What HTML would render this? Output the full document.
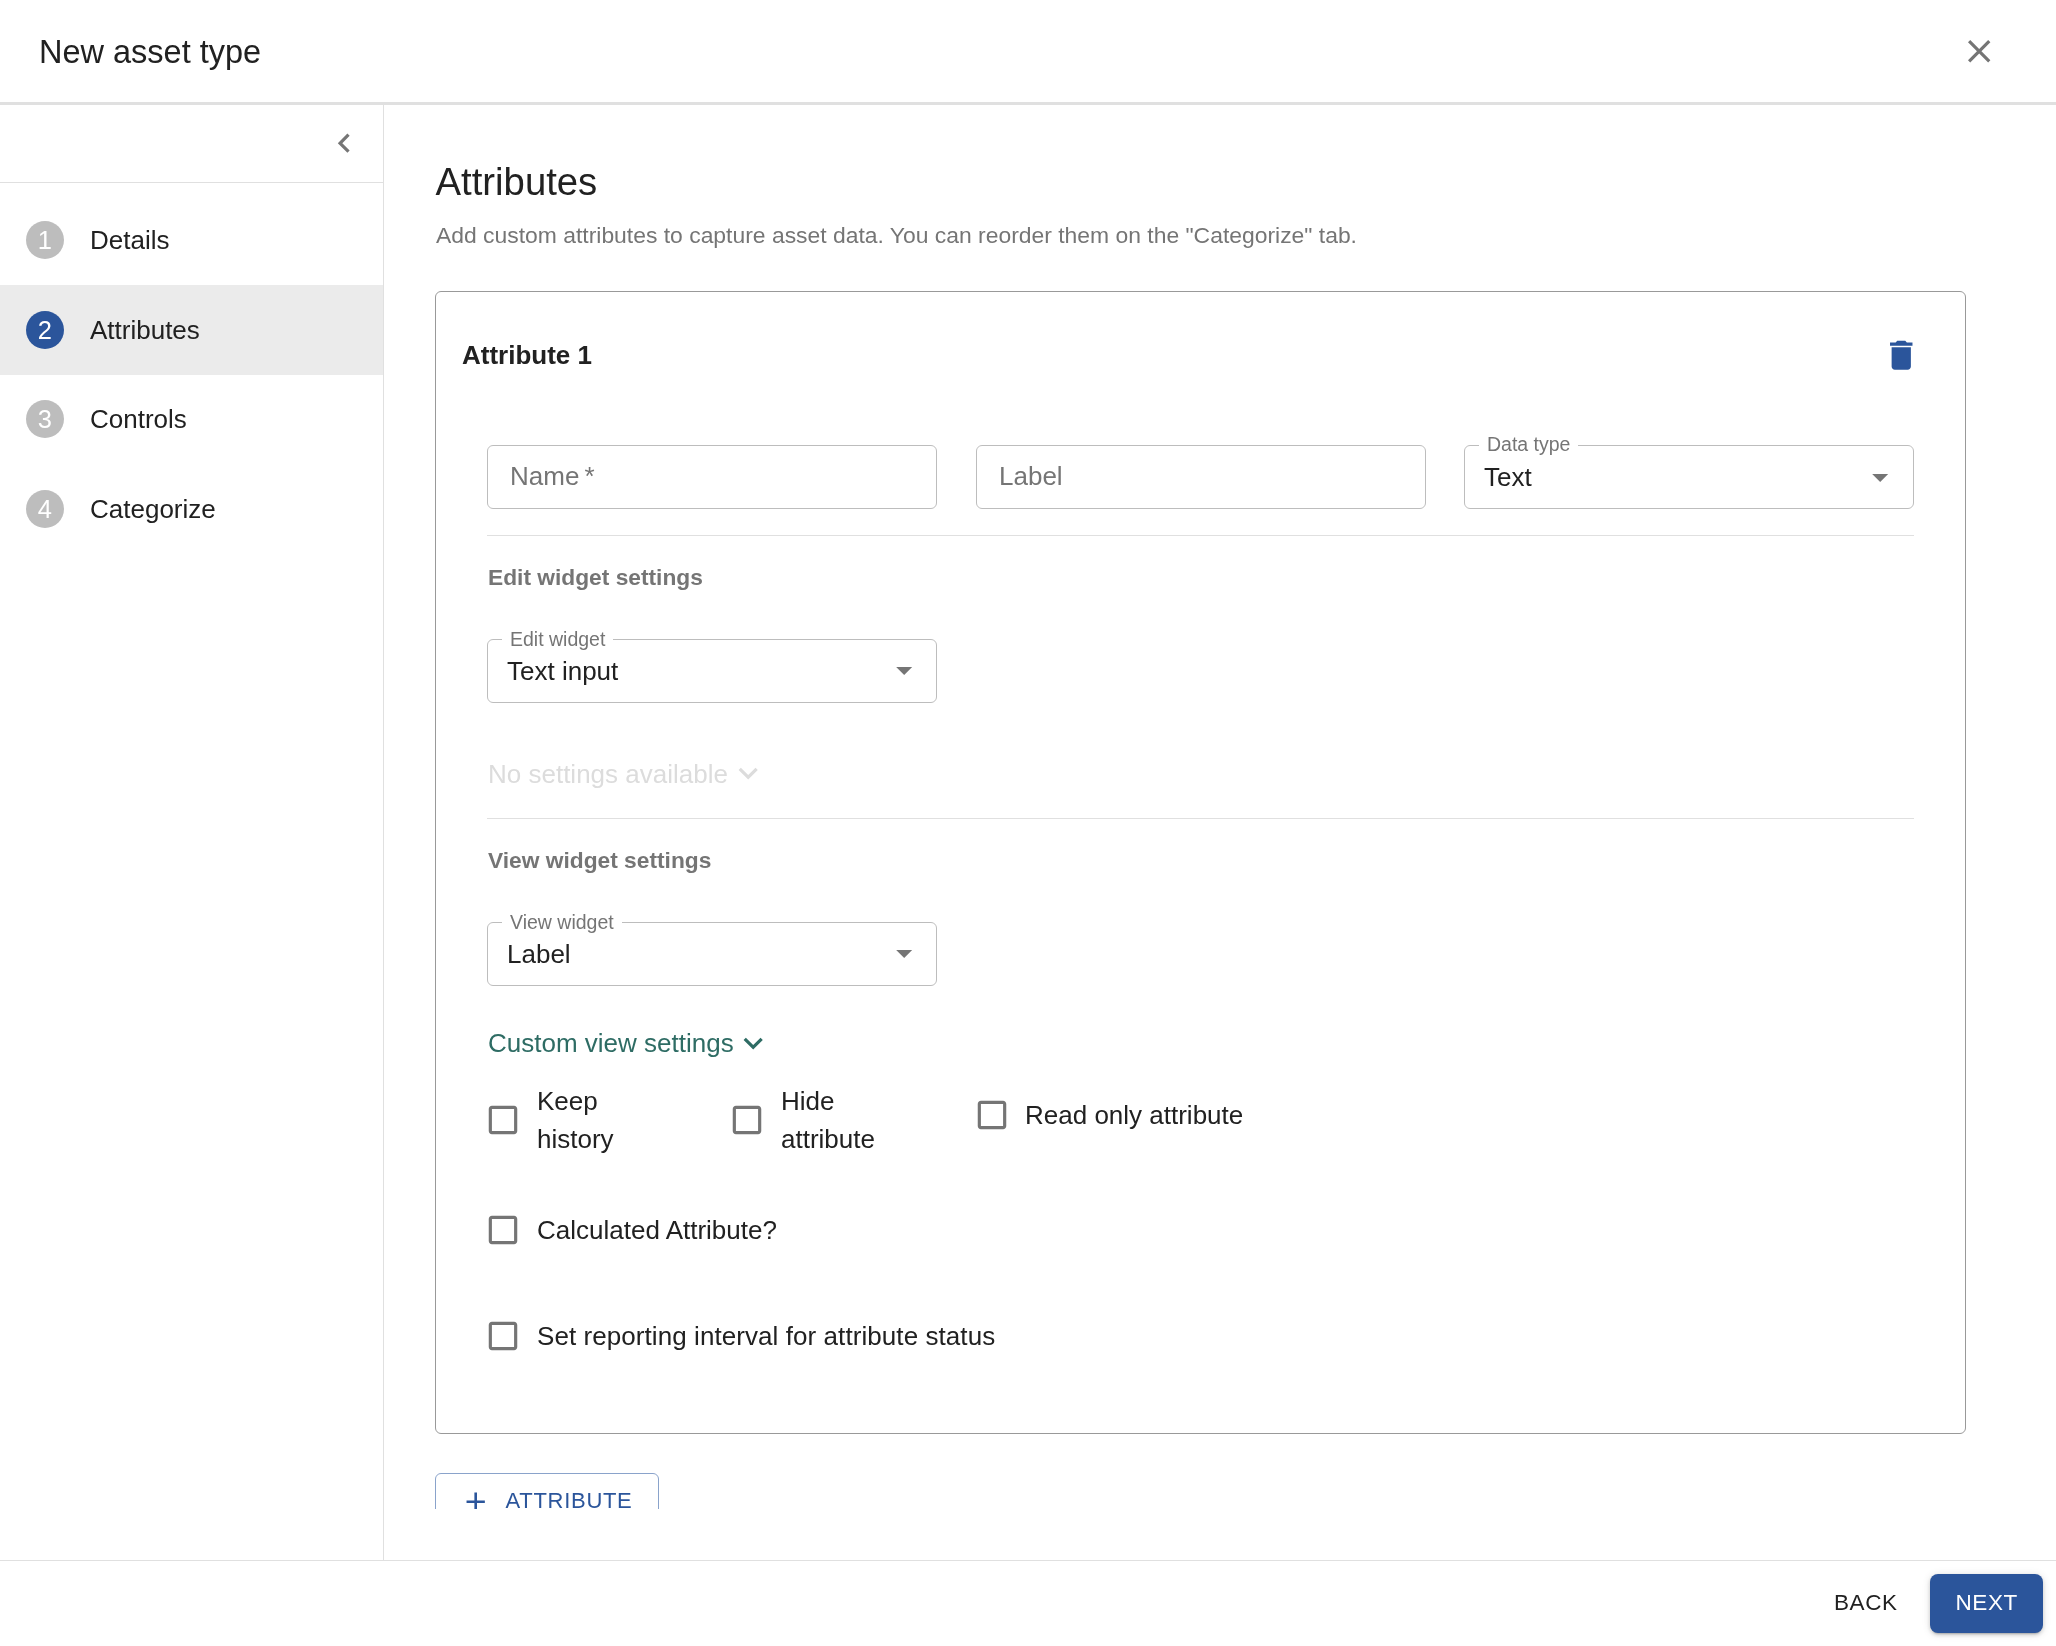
<!DOCTYPE html>
<html><head><meta charset="utf-8">
<style>
*{box-sizing:border-box;margin:0;padding:0}
html,body{width:2056px;height:1646px;overflow:hidden;background:#fff}
body{font-family:"Liberation Sans",sans-serif;color:#212121;position:relative}
.a{position:absolute;white-space:nowrap}
.t{position:absolute;white-space:nowrap;line-height:1}
svg{position:absolute;display:block}
.hline{position:absolute;height:1px;background:#e0e0e0}
.circ{position:absolute;width:38px;height:38px;border-radius:50%;background:#bdbdbd;color:#fff;font-size:25.5px;line-height:38px;text-align:center;text-indent:-0.5px}
.step{position:absolute;left:90px;font-size:26px;line-height:1;color:#212121}
.field{position:absolute;border:1px solid #bdbdbd;border-radius:6px}
.lbl{position:absolute;font-size:19.5px;line-height:1;color:#757575;background:#fff;padding:0 8px}
.ph{position:absolute;font-size:26px;line-height:1;color:#757575}
.val{position:absolute;font-size:26px;line-height:1;color:#212121}
.sec{position:absolute;font-size:22.75px;line-height:1;font-weight:700;color:#757575}
.cb{position:absolute;width:38px;height:38px}
.cbl{position:absolute;font-size:26px;line-height:38px;color:#212121}
</style></head><body>
<div id="root" style="position:absolute;left:0;top:0;width:2056px;height:1646px;will-change:transform">

<!-- header -->
<div class="t" style="left:39px;top:36px;font-size:32.5px">New asset type</div>
<svg style="left:1960px;top:32px" width="38.4" height="38.4" viewBox="0 0 24 24"><path fill="#757575" d="M19 6.41 17.59 5 12 10.59 6.41 5 5 6.41 10.59 12 5 17.59 6.41 19 12 13.41 17.59 19 19 17.59 13.41 12z"/></svg>
<div style="position:absolute;left:0;top:102px;width:2056px;height:3px;background:#e0e0e0"></div>

<!-- sidebar -->
<div style="position:absolute;left:383px;top:105px;width:1px;height:1455px;background:#e0e0e0"></div>
<svg style="left:325px;top:124px" width="38.4" height="38.4" viewBox="0 0 24 24"><path fill="#757575" d="M15.41 7.41 14 6l-6 6 6 6 1.41-1.41L10.83 12z"/></svg>
<div class="hline" style="left:0;top:182px;width:383px"></div>
<div style="position:absolute;left:0;top:285px;width:383px;height:90px;background:#ebebeb"></div>
<div class="circ" style="left:26px;top:221px">1</div>
<div class="step" style="top:227px">Details</div>
<div class="circ" style="left:26px;top:311px;background:#2b559b">2</div>
<div class="step" style="top:317px">Attributes</div>
<div class="circ" style="left:26px;top:400px">3</div>
<div class="step" style="top:406px">Controls</div>
<div class="circ" style="left:26px;top:490px">4</div>
<div class="step" style="top:496px">Categorize</div>

<!-- content -->
<div class="t" style="left:435.5px;top:163px;font-size:38.3px">Attributes</div>
<div class="t" style="left:436px;top:224px;font-size:22.9px;color:#757575">Add custom attributes to capture asset data. You can reorder them on the "Categorize" tab.</div>

<!-- card -->
<div style="position:absolute;left:435px;top:291px;width:1531px;height:1143px;border:1px solid #999;border-radius:6px"></div>
<div class="t" style="left:462px;top:342px;font-size:26px;font-weight:700">Attribute 1</div>
<svg style="left:1882px;top:336px" width="38.5" height="38.5" viewBox="0 0 24 24"><path fill="#2b559b" d="M6 19c0 1.1.9 2 2 2h8c1.1 0 2-.9 2-2V7H6v12zM19 4h-3.5l-1-1h-5l-1 1H5v2h14V4z"/></svg>

<!-- row 1 -->
<div class="field" style="left:487px;top:445px;width:450px;height:64px"></div>
<div class="ph" style="left:510px;top:463px">Name&thinsp;*</div>
<div class="field" style="left:976px;top:445px;width:450px;height:64px"></div>
<div class="ph" style="left:999px;top:463px">Label</div>
<div class="field" style="left:1464px;top:445px;width:450px;height:64px"></div>
<div class="lbl" style="left:1479px;top:435px">Data type</div>
<div class="val" style="left:1484px;top:464px">Text</div>
<svg style="left:1861px;top:458px" width="38.4" height="38.4" viewBox="0 0 24 24"><path fill="#757575" d="M7 10l5 5 5-5z"/></svg>

<div class="hline" style="left:487px;top:535px;width:1427px"></div>

<div class="sec" style="left:488px;top:566px">Edit widget settings</div>
<div class="field" style="left:487px;top:639px;width:450px;height:64px"></div>
<div class="lbl" style="left:502px;top:630px">Edit widget</div>
<div class="val" style="left:507px;top:658px">Text input</div>
<svg style="left:885px;top:651px" width="38.4" height="38.4" viewBox="0 0 24 24"><path fill="#757575" d="M7 10l5 5 5-5z"/></svg>

<div class="t" style="left:488px;top:760.5px;font-size:26px;color:#dcdcdc">No settings available</div>
<svg style="left:729px;top:754px" width="38.4" height="38.4" viewBox="0 0 24 24"><path fill="#dcdcdc" d="M7.41 8.59 12 13.17l4.59-4.58L18 10l-6 6-6-6 1.41-1.41z"/></svg>

<div class="hline" style="left:487px;top:818px;width:1427px"></div>

<div class="sec" style="left:488px;top:849px">View widget settings</div>
<div class="field" style="left:487px;top:922px;width:450px;height:64px"></div>
<div class="lbl" style="left:502px;top:913px">View widget</div>
<div class="val" style="left:507px;top:941px">Label</div>
<svg style="left:885px;top:934px" width="38.4" height="38.4" viewBox="0 0 24 24"><path fill="#757575" d="M7 10l5 5 5-5z"/></svg>

<div class="t" style="left:488px;top:1030px;font-size:26px;color:#2e6c64">Custom view settings</div>
<svg style="left:734px;top:1024px" width="38.4" height="38.4" viewBox="0 0 24 24"><path fill="#2e6c64" d="M7.41 8.59 12 13.17l4.59-4.58L18 10l-6 6-6-6 1.41-1.41z"/></svg>

<!-- checkboxes -->
<svg class="cb" style="left:483.9px;top:1100.9px" viewBox="0 0 24 24"><path fill="#757575" d="M19 5v14H5V5h14m0-2H5c-1.11 0-2 .9-2 2v14c0 1.1.89 2 2 2h14c1.1 0 2-.9 2-2V5c0-1.1-.9-2-2-2z"/></svg>
<div class="cbl" style="left:537px;top:1082px">Keep<br>history</div>
<svg class="cb" style="left:727.9px;top:1100.9px" viewBox="0 0 24 24"><path fill="#757575" d="M19 5v14H5V5h14m0-2H5c-1.11 0-2 .9-2 2v14c0 1.1.89 2 2 2h14c1.1 0 2-.9 2-2V5c0-1.1-.9-2-2-2z"/></svg>
<div class="cbl" style="left:781px;top:1082px">Hide<br>attribute</div>
<svg class="cb" style="left:972.9px;top:1096.2px" viewBox="0 0 24 24"><path fill="#757575" d="M19 5v14H5V5h14m0-2H5c-1.11 0-2 .9-2 2v14c0 1.1.89 2 2 2h14c1.1 0 2-.9 2-2V5c0-1.1-.9-2-2-2z"/></svg>
<div class="cbl" style="left:1025px;top:1096px">Read only attribute</div>
<svg class="cb" style="left:483.9px;top:1211.2px" viewBox="0 0 24 24"><path fill="#757575" d="M19 5v14H5V5h14m0-2H5c-1.11 0-2 .9-2 2v14c0 1.1.89 2 2 2h14c1.1 0 2-.9 2-2V5c0-1.1-.9-2-2-2z"/></svg>
<div class="cbl" style="left:537px;top:1211px">Calculated Attribute?</div>
<svg class="cb" style="left:483.9px;top:1316.9px" viewBox="0 0 24 24"><path fill="#757575" d="M19 5v14H5V5h14m0-2H5c-1.11 0-2 .9-2 2v14c0 1.1.89 2 2 2h14c1.1 0 2-.9 2-2V5c0-1.1-.9-2-2-2z"/></svg>
<div class="cbl" style="left:537px;top:1317px;letter-spacing:0.07px">Set reporting interval for attribute status</div>

<!-- add attribute button (clipped) -->
<div style="position:absolute;left:0;top:1473px;width:2056px;height:36px;overflow:hidden">
  <div style="position:absolute;left:435px;top:0;width:224px;height:60px;border:1px solid #8aa3cb;border-radius:6px"></div>
  <svg style="left:460.3px;top:12.9px" width="31.4" height="31.4" viewBox="0 0 24 24"><path fill="#2b559b" d="M19 13h-6v6h-2v-6H5v-2h6V5h2v6h6v2z"/></svg>
  <div class="t" style="left:505.6px;top:17.3px;font-size:22px;color:#2b559b;letter-spacing:0.7px">ATTRIBUTE</div>
</div>

<!-- footer -->
<div class="hline" style="left:0;top:1560px;width:2056px"></div>
<div class="t" style="left:1834px;top:1592px;font-size:22.5px;color:#212121;letter-spacing:0.6px">BACK</div>
<div style="position:absolute;left:1930px;top:1574px;width:113px;height:59px;background:#2b559b;border-radius:8px;box-shadow:0 3px 2px -2px rgba(0,0,0,0.2),0 2px 4px 0 rgba(0,0,0,0.14),0 1px 8px 0 rgba(0,0,0,0.12)"></div>
<div class="t" style="left:1955.5px;top:1592px;font-size:22.5px;color:#fff;letter-spacing:0.6px">NEXT</div>

</div>
</body></html>
